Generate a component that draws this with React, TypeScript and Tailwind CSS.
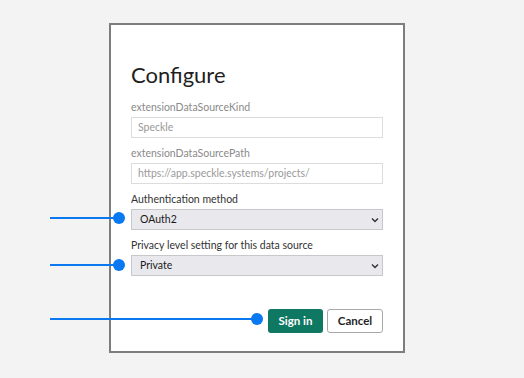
const font = { fontFamily: 'Lato, "Open Sans", sans-serif' };

function Field({ label, value }: { label: string; value: string }) {
  return (
    <div className="flex flex-col">
      <span className="text-[10.5px] leading-[14px] text-[#8a8a8a]">{label}</span>
      <div className="mt-[3px] flex h-[21px] items-center border border-[#dcdcdc] bg-white px-[6px] text-[10.5px] text-[#9a9a9a]">
        {value}
      </div>
    </div>
  );
}

function Select({ label, value }: { label: string; value: string }) {
  return (
    <div className="flex flex-col">
      <span className="text-[10.5px] leading-[14px] text-[#333333]">{label}</span>
      <div className="mt-[3px] flex h-[21px] items-center justify-between border border-[#c8c8cc] bg-[#e9e9ed] pl-[8px] pr-[3px] text-[10.5px] text-[#1a1a1a]">
        <span>{value}</span>
        <svg width="8" height="6" viewBox="0 0 8 6" fill="none">
          <path d="M1 1.5 L4 4.5 L7 1.5" stroke="#333" strokeWidth="1.4" />
        </svg>
      </div>
    </div>
  );
}

function Pointer({ top, width }: { top: number; width: number }) {
  return (
    <div className="absolute left-[50px] flex items-center" style={{ top: top - 6 }}>
      <div className="h-[2px] bg-[#0a78f0]" style={{ width }} />
      <div className="h-[12px] w-[12px] -ml-[1px] rounded-full bg-[#0a78f0]" />
    </div>
  );
}

export default function App() {
  return (
    <div className="relative h-[378px] w-[524px] bg-[#f3f3f3]" style={font}>
      <div className="absolute left-[109px] top-[23px] flex h-[330px] w-[296px] flex-col border-2 border-[#7d7d7d] bg-white px-[20px] pt-[36px]">
        <h1 className="text-[22px] leading-[28px] text-[#1f1f1f]">Configure</h1>
        <div className="mt-[11px] flex flex-col gap-[8px]">
          <Field label="extensionDataSourceKind" value="Speckle" />
          <Field label="extensionDataSourcePath" value="https://app.speckle.systems/projects/" />
          <Select label="Authentication method" value="OAuth2" />
          <Select label="Privacy level setting for this data source" value="Private" />
        </div>
        <div className="mt-[33px] flex justify-end gap-[4px]">
          <button className="h-[24px] w-[55px] rounded-[3px] bg-[#0f7862] text-[11.5px] font-bold text-white">
            Sign in
          </button>
          <button className="h-[24px] w-[56px] rounded-[3px] border border-[#a8a8a8] bg-white text-[11.5px] font-bold text-[#1f1f1f]">
            Cancel
          </button>
        </div>
      </div>
      <Pointer top={218} width={64} />
      <Pointer top={265} width={64} />
      <Pointer top={319} width={202} />
    </div>
  );
}
